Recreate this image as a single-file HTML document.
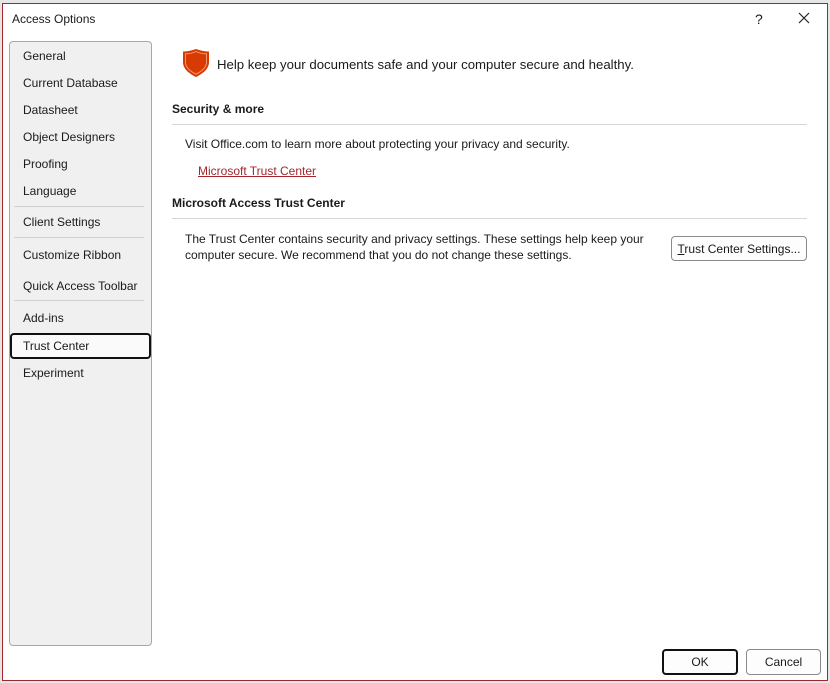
<!DOCTYPE html>
<html><head><style>
body{margin:0;width:830px;height:683px;background:#e6e6e6;position:relative;overflow:hidden;font-family:"Liberation Sans",sans-serif;font-size:12px;color:#1a1a1a}
.dlg{position:absolute;left:2px;top:3px;width:824px;height:676px;background:#fff;border:1px solid #a4262c}
.a{position:absolute;white-space:nowrap}
.side{position:absolute;left:9px;top:41px;width:141px;height:603px;background:#f0f0f0;border:1px solid #a8a8a8;border-radius:4px}
.sep{position:absolute;left:14px;width:130px;height:1px;background:#d0d0d0}
.hr{position:absolute;left:172px;width:635px;height:1px;background:#d6d6d6}
.btn{position:absolute;border:1px solid #8a8a8a;border-radius:4px;background:#fdfdfd;text-align:center}
</style></head><body>
<div class="dlg"></div>
<div class="a" style="left:12px;top:12px">Access Options</div>
<div class="a" style="left:755px;top:11px;font-size:14px">?</div>
<svg class="a" style="left:798px;top:12px" width="12" height="12"><path d="M1 1L11 11M11 1L1 11" stroke="#222" stroke-width="1.2"/></svg>
<div class="side"></div>
<div class="a" style="left:23px;top:49px">General</div>
<div class="a" style="left:23px;top:76px">Current Database</div>
<div class="a" style="left:23px;top:103px">Datasheet</div>
<div class="a" style="left:23px;top:130px">Object Designers</div>
<div class="a" style="left:23px;top:157px">Proofing</div>
<div class="a" style="left:23px;top:184px">Language</div>
<div class="sep" style="top:206px"></div>
<div class="a" style="left:23px;top:215px">Client Settings</div>
<div class="sep" style="top:237px"></div>
<div class="a" style="left:23px;top:248px">Customize Ribbon</div>
<div class="a" style="left:23px;top:279px">Quick Access Toolbar</div>
<div class="sep" style="top:300px"></div>
<div class="a" style="left:23px;top:311px">Add-ins</div>
<div class="a" style="left:10px;top:333px;width:137px;height:22px;border:2px solid #111;border-radius:4px;background:#fafafa"></div>
<div class="a" style="left:23px;top:339px">Trust Center</div>
<div class="a" style="left:23px;top:366px">Experiment</div>
<svg class="a" style="left:182px;top:48px" width="28" height="30" viewBox="0 0 28 30"><path d="M14 1C10 2.5 5 3.5 1 3.5V14C1 21 7 25.5 14 29C21 25.5 27 21 27 14V3.5C23 3.5 18 2.5 14 1Z" fill="#d83b01"/><path d="M14 3.5C11 5 7 5.8 3.5 5.8V14C3.5 19.8 8.5 23.3 14 26.2C19.5 23.3 24.5 19.8 24.5 14V5.8C21 5.8 17 5 14 3.5Z" fill="none" stroke="#f6a07c" stroke-width="0.9"/></svg>
<div class="a" style="left:217px;top:57px;font-size:13.2px">Help keep your documents safe and your computer secure and healthy.</div>
<div class="a" style="left:172px;top:102px;font-weight:bold">Security &amp; more</div>
<div class="hr" style="top:124px"></div>
<div class="a" style="left:185px;top:137px">Visit Office.com to learn more about protecting your privacy and security.</div>
<div class="a" style="left:198px;top:164px;color:#a4262c;text-decoration:underline">Microsoft Trust Center</div>
<div class="a" style="left:172px;top:196px;font-weight:bold">Microsoft Access Trust Center</div>
<div class="hr" style="top:218px"></div>
<div class="a" style="left:185px;top:231px;line-height:16px">The Trust Center contains security and privacy settings. These settings help keep your<br>computer secure. We recommend that you do not change these settings.</div>
<div class="btn" style="left:671px;top:236px;width:134px;height:23px;line-height:24px"><u>T</u>rust Center Settings...</div>
<div class="btn" style="left:662px;top:649px;width:72px;height:22px;line-height:23px;border:2px solid #111">OK</div>
<div class="btn" style="left:746px;top:649px;width:73px;height:24px;line-height:25px">Cancel</div>
</body></html>
